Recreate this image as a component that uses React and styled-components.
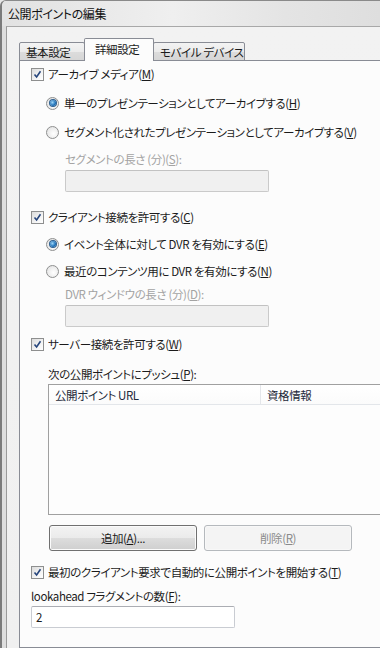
import React from 'react';
import styled, { createGlobalStyle } from 'styled-components';

const Global = createGlobalStyle`
	html, body { margin: 0; padding: 0; background: #e6e6e6; }
	body {
		font-family: "Noto Sans CJK JP", "Noto Sans", sans-serif;
		font-size: 11.5px;
		letter-spacing: -0.4px;
		font-feature-settings: "palt";
		color: #1b1b1b;
	}
`

const Window = styled.div`
	width: 380px;
	height: 648px;
	overflow: hidden;
	box-sizing: border-box;
	border-left: 2px solid #7b7b7b;
	border-top: 1px solid #8a8a8a;
	border-top-left-radius: 6px;
	background: linear-gradient(#e4e4e4, #dcdcdc 40px, #d8d8d8);
	display: flex;
	flex-direction: column;
`

const TitleBar = styled.div`
	height: 25px;
	flex: none;
	display: flex;
	align-items: center;
	padding-left: 6px;
	background: linear-gradient(90deg, #e2e2e2, #efefef 45%, #e4e4e4 75%, #dedede);
	font-size: 12px;
	color: #111;
`

const Frame = styled.div`
	flex: 1;
	padding-left: 4px;
	display: flex;
	background: #dedede;
`

const Client = styled.div`
	flex: 1;
	border-left: 1px solid #9a9a9a;
	border-top: 1px solid #a8a8a8;
	background: linear-gradient(#f2f2f2, #f0f0f0);
	padding: 12px 0 0 12px;
	display: flex;
	flex-direction: column;
	min-width: 0;
`

const TabStrip = styled.div`
	display: flex;
	align-items: flex-end;
	height: 22px;
	position: relative;
	z-index: 1;
	margin-bottom: -1px;
`

const Tab = styled.div`
	box-sizing: border-box;
	height: ${p => (p.$active ? '23px' : '19px')};
	width: ${p => p.$w}px;
	margin-left: ${p => (p.$active ? '-1px' : '0')};
	margin-right: ${p => (p.$active ? '-1px' : '0')};
	border: 1px solid #898c95;
	border-bottom: ${p => (p.$active ? 'none' : '1px solid #898c95')};
	border-radius: 2px 2px 0 0;
	background: ${p => (p.$active ? '#fcfcfc' : 'linear-gradient(#f3f3f3, #ebebeb 50%, #dcdcdc 52%, #d6d6d6)')};
	display: flex;
	align-items: ${p => (p.$active ? 'flex-start' : 'center')};
	padding: ${p => (p.$active ? '2px 0 0 10px' : '0 0 0 6px')};
	white-space: nowrap;
	color: #1b1b1b;
	position: relative;
	z-index: ${p => (p.$active ? 2 : 1)};
`

const Panel = styled.div`
	flex: 1;
	width: 420px;
	border: 1px solid #898c95;
	background: #fcfcfc;
	padding: 0 0 0 11px;
	display: flex;
	flex-direction: column;
`

const Row = styled.div`
	display: flex;
	align-items: center;
	height: 20px;
	margin-top: ${p => p.$gap || 0}px;
	margin-left: ${p => p.$indent || 0}px;
	white-space: nowrap;
	color: ${p => (p.$disabled ? '#a3a3a3' : '#1b1b1b')};
	flex: none;
`

const Box = styled.span`
	box-sizing: border-box;
	width: 13px;
	height: 13px;
	border: 1px solid #8e8f8f;
	background: linear-gradient(135deg, #dcdcdc, #f7f7f7 70%, #ffffff);
	margin-right: 4px;
	display: flex;
	align-items: center;
	justify-content: center;
	flex: none;
`

const Radio = styled.span`
	box-sizing: border-box;
	width: 13px;
	height: 13px;
	border-radius: 50%;
	border: 1px solid #8e8f8f;
	background: radial-gradient(circle at 60% 60%, #ffffff, #dedede);
	margin-right: 5px;
	display: flex;
	align-items: center;
	justify-content: center;
	flex: none;
`

const Dot = styled.span`
	width: 6px;
	height: 6px;
	border-radius: 50%;
	background: radial-gradient(circle at 40% 40%, #9fd6f7, #1b6fb8 60%, #0e4f8a);
	box-shadow: 0 0 0 1px #2d5f8f;
`

const TextInput = styled.div`
	box-sizing: border-box;
	width: 204px;
	height: 22px;
	margin-top: ${p => p.$gap || 0}px;
	margin-left: ${p => p.$indent || 0}px;
	border: 1px solid ${p => (p.$disabled ? '#cacaca' : '#c9ccd2')};
	border-top-color: ${p => (p.$disabled ? '#c2c2c2' : '#abadb3')};
	border-radius: 2px;
	background: ${p => (p.$disabled ? '#f0f0f0' : '#ffffff')};
	padding-left: 4px;
	display: flex;
	align-items: center;
	flex: none;
`

const ListBox = styled.div`
	box-sizing: border-box;
	height: 131px;
	margin-left: 17px;
	border: 1px solid #a0a0a0;
	background: #fdfdfd;
	flex: none;
`

const ListHeader = styled.div`
	display: flex;
	height: 19px;
	border-bottom: 1px solid #e3e6ea;
	background: linear-gradient(#ffffff, #fbfbfb);
`

const HeaderCell = styled.div`
	width: ${p => p.$w}px;
	box-sizing: border-box;
	padding-left: 6px;
	display: flex;
	align-items: center;
	border-right: 1px solid #e4e6ea;
	color: #1e2a3a;
`

const ButtonRow = styled.div`
	display: flex;
	gap: 7px;
	margin-top: 10px;
	margin-left: 18px;
	flex: none;
`

const Button = styled.div`
	box-sizing: border-box;
	width: 148px;
	height: 26px;
	border-radius: 3px;
	border: 1px solid ${p => (p.$disabled ? '#b5b9bd' : '#707070')};
	background: ${p => (p.$disabled ? '#f4f4f4' : 'linear-gradient(#f3f3f3, #ebebeb 48%, #dddddd 50%, #cfcfcf)')};
	box-shadow: inset 0 0 0 1px ${p => (p.$disabled ? '#f8f8f8' : '#fbfbfb')};
	color: ${p => (p.$disabled ? '#8b8b8b' : '#1b1b1b')};
	display: flex;
	align-items: center;
	justify-content: center;
`

const Check = () => (
	<Box>
		<svg width="9" height="9" viewBox="0 0 9 9">
			<path d="M1.5 4.5 L3.6 7 L7.5 1.2" fill="none" stroke="#26457c" strokeWidth="1.6" />
		</svg>
	</Box>
)

const App = () => {
	return (
		<>
			<Global />
			<Window>
				<TitleBar>公開ポイントの編集</TitleBar>
				<Frame>
					<Client>
						<TabStrip>
							<Tab $w={66}>基本設定</Tab>
							<Tab $w={70} $active>詳細設定</Tab>
							<Tab $w={92}>モバイル デバイス</Tab>
						</TabStrip>
						<Panel>
							<Row $gap={3}><Check />アーカイブ メディア(<u>M</u>)</Row>
							<Row $gap={9} $indent={15}><Radio><Dot /></Radio>単一のプレゼンテーションとしてアーカイブする(<u>H</u>)</Row>
							<Row $gap={9} $indent={15}><Radio />セグメント化されたプレゼンテーションとしてアーカイブする(<u>V</u>)</Row>
							<Row $gap={7} $indent={34} $disabled>セグメントの長さ (分)(<u>S</u>):</Row>
							<TextInput $gap={1} $indent={34} $disabled />
							<Row $gap={15}><Check />クライアント接続を許可する(<u>C</u>)</Row>
							<Row $gap={7} $indent={15}><Radio><Dot /></Radio>イベント全体に対して DVR を有効にする(<u>E</u>)</Row>
							<Row $gap={7} $indent={15}><Radio />最近のコンテンツ用に DVR を有効にする(<u>N</u>)</Row>
							<Row $gap={3} $indent={34} $disabled>DVR ウィンドウの長さ (分)(<u>D</u>):</Row>
							<TextInput $gap={1} $indent={34} $disabled />
							<Row $gap={7}><Check />サーバー接続を許可する(<u>W</u>)</Row>
							<Row $gap={10} $indent={17}>次の公開ポイントにプッシュ(<u>P</u>):</Row>
							<ListBox>
								<ListHeader>
									<HeaderCell $w={212}>公開ポイント URL</HeaderCell>
									<HeaderCell $w={180}>資格情報</HeaderCell>
								</ListHeader>
							</ListBox>
							<ButtonRow>
								<Button>追加(<u>A</u>)...</Button>
								<Button $disabled>削除(<u>R</u>)</Button>
							</ButtonRow>
							<Row $gap={11}><Check />最初のクライアント要求で自動的に公開ポイントを開始する(<u>T</u>)</Row>
							<Row $gap={4}>lookahead フラグメントの数(<u>F</u>):</Row>
							<TextInput>2</TextInput>
						</Panel>
					</Client>
				</Frame>
			</Window>
		</>
	);
}
export default App;
